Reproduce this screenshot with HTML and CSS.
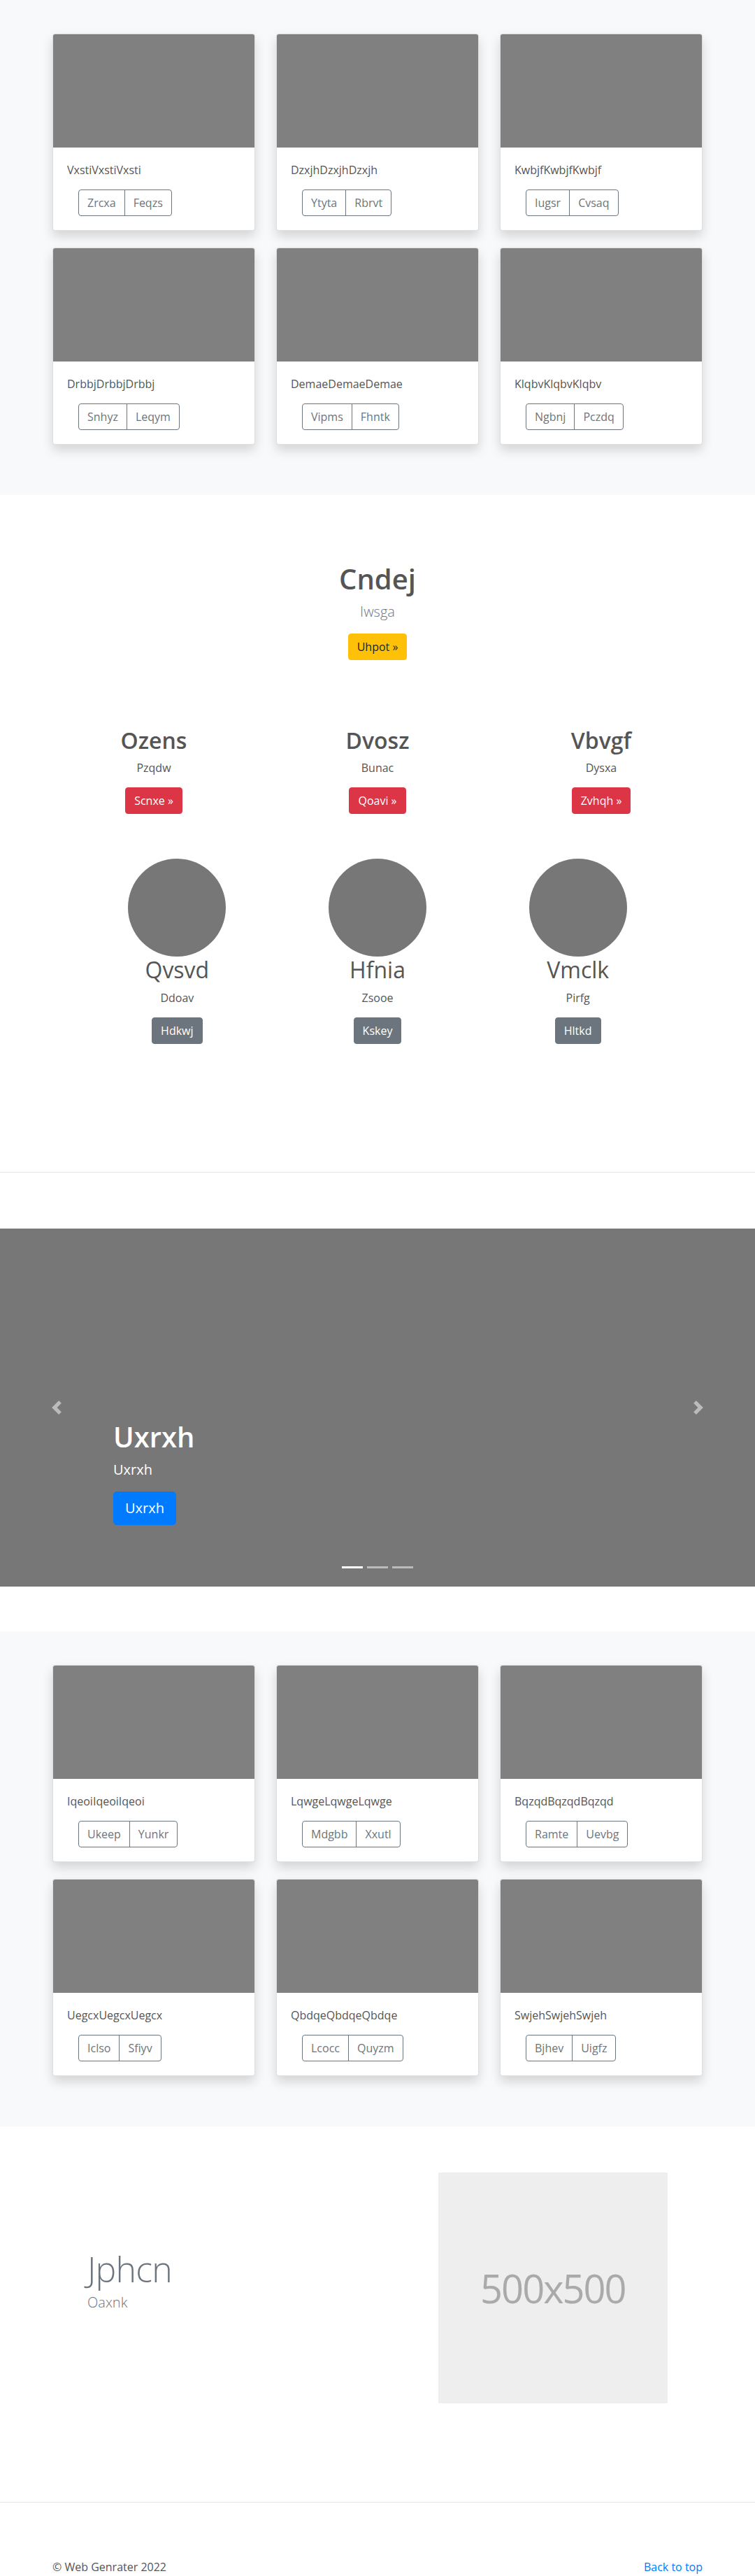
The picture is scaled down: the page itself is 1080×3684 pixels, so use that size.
FILE: index.html
```html
<!DOCTYPE html>
<html lang="en">
<head>
<meta charset="utf-8">
<title>Album</title>
<link rel="stylesheet" href="styles.css">
</head>
<body>
<main>
  <section class="album">
    <div class="container">
      <div class="card-grid">
        <div class="card"><div class="card-img"></div><div class="card-body"><p class="card-text">VxstiVxstiVxsti</p><div class="btn-group"><button class="btn btn-outline">Zrcxa</button><button class="btn btn-outline">Feqzs</button></div></div></div>
        <div class="card"><div class="card-img"></div><div class="card-body"><p class="card-text">DzxjhDzxjhDzxjh</p><div class="btn-group"><button class="btn btn-outline">Ytyta</button><button class="btn btn-outline">Rbrvt</button></div></div></div>
        <div class="card"><div class="card-img"></div><div class="card-body"><p class="card-text">KwbjfKwbjfKwbjf</p><div class="btn-group"><button class="btn btn-outline">Iugsr</button><button class="btn btn-outline">Cvsaq</button></div></div></div>
        <div class="card"><div class="card-img"></div><div class="card-body"><p class="card-text">DrbbjDrbbjDrbbj</p><div class="btn-group"><button class="btn btn-outline">Snhyz</button><button class="btn btn-outline">Leqym</button></div></div></div>
        <div class="card"><div class="card-img"></div><div class="card-body"><p class="card-text">DemaeDemaeDemae</p><div class="btn-group"><button class="btn btn-outline">Vipms</button><button class="btn btn-outline">Fhntk</button></div></div></div>
        <div class="card"><div class="card-img"></div><div class="card-body"><p class="card-text">KlqbvKlqbvKlqbv</p><div class="btn-group"><button class="btn btn-outline">Ngbnj</button><button class="btn btn-outline">Pczdq</button></div></div></div>
      </div>
    </div>
  </section>

  <section class="intro">
    <div class="hero">
      <h1 class="hero-title">Cndej</h1>
      <p class="lead">Iwsga</p>
      <a class="btn btn-warning" href="#">Uhpot &raquo;</a>
    </div>

    <div class="features">
      <div class="feature">
        <h2 class="feature-title">Ozens</h2>
        <p class="feature-text">Pzqdw</p>
        <a class="btn btn-danger" href="#">Scnxe &raquo;</a>
      </div>
      <div class="feature">
        <h2 class="feature-title">Dvosz</h2>
        <p class="feature-text">Bunac</p>
        <a class="btn btn-danger" href="#">Qoavi &raquo;</a>
      </div>
      <div class="feature">
        <h2 class="feature-title">Vbvgf</h2>
        <p class="feature-text">Dysxa</p>
        <a class="btn btn-danger" href="#">Zvhqh &raquo;</a>
      </div>
    </div>

    <div class="team">
      <div class="member">
        <div class="avatar"></div>
        <h2 class="member-name">Qvsvd</h2>
        <p class="feature-text">Ddoav</p>
        <a class="btn btn-secondary" href="#">Hdkwj</a>
      </div>
      <div class="member">
        <div class="avatar"></div>
        <h2 class="member-name">Hfnia</h2>
        <p class="feature-text">Zsooe</p>
        <a class="btn btn-secondary" href="#">Kskey</a>
      </div>
      <div class="member">
        <div class="avatar"></div>
        <h2 class="member-name">Vmclk</h2>
        <p class="feature-text">Pirfg</p>
        <a class="btn btn-secondary" href="#">Hltkd</a>
      </div>
    </div>
  </section>

  <hr class="divider">

  <div class="carousel">
    <a class="carousel-control prev" href="#">
      <svg width="20" height="20" viewBox="0 0 8 8" fill="#fff"><path d="M5.25 0l-4 4 4 4 1.5-1.5L4.25 4l2.5-2.5L5.25 0z"/></svg>
    </a>
    <div class="carousel-caption">
      <h1 class="caption-title">Uxrxh</h1>
      <p class="caption-text">Uxrxh</p>
      <a class="btn btn-lg btn-primary" href="#">Uxrxh</a>
    </div>
    <a class="carousel-control next" href="#">
      <svg width="20" height="20" viewBox="0 0 8 8" fill="#fff"><path d="M2.75 0l-1.5 1.5L3.75 4l-2.5 2.5L2.75 8l4-4-4-4z"/></svg>
    </a>
    <ol class="indicators">
      <li class="active"></li>
      <li></li>
      <li></li>
    </ol>
  </div>

  <section class="album album-second">
    <div class="container">
      <div class="card-grid">
        <div class="card"><div class="card-img"></div><div class="card-body"><p class="card-text">IqeoiIqeoiIqeoi</p><div class="btn-group"><button class="btn btn-outline">Ukeep</button><button class="btn btn-outline">Yunkr</button></div></div></div>
        <div class="card"><div class="card-img"></div><div class="card-body"><p class="card-text">LqwgeLqwgeLqwge</p><div class="btn-group"><button class="btn btn-outline">Mdgbb</button><button class="btn btn-outline">Xxutl</button></div></div></div>
        <div class="card"><div class="card-img"></div><div class="card-body"><p class="card-text">BqzqdBqzqdBqzqd</p><div class="btn-group"><button class="btn btn-outline">Ramte</button><button class="btn btn-outline">Uevbg</button></div></div></div>
        <div class="card"><div class="card-img"></div><div class="card-body"><p class="card-text">UegcxUegcxUegcx</p><div class="btn-group"><button class="btn btn-outline">Iclso</button><button class="btn btn-outline">Sfiyv</button></div></div></div>
        <div class="card"><div class="card-img"></div><div class="card-body"><p class="card-text">QbdqeQbdqeQbdqe</p><div class="btn-group"><button class="btn btn-outline">Lcocc</button><button class="btn btn-outline">Quyzm</button></div></div></div>
        <div class="card"><div class="card-img"></div><div class="card-body"><p class="card-text">SwjehSwjehSwjeh</p><div class="btn-group"><button class="btn btn-outline">Bjhev</button><button class="btn btn-outline">Uigfz</button></div></div></div>
      </div>
    </div>
  </section>

  <section class="featurette">
    <div class="featurette-text">
      <h2 class="featurette-heading">Jphcn</h2>
      <p class="lead">Oaxnk</p>
    </div>
    <div class="featurette-media">
      <div class="placeholder">500x500</div>
    </div>
  </section>

  <hr class="divider">

  <footer class="footer">
    <p class="copyright">&copy; Web Genrater 2022</p>
    <p class="back"><a href="#">Back to top</a></p>
  </footer>
</main>
</body>
</html>
```

FILE: styles.css
```css
* { box-sizing: border-box; }

html, body {
  margin: 0;
  padding: 0;
}

body {
  font-family: "Open Sans", "Noto Sans", Arial, sans-serif;
  font-size: 16px;
  line-height: 1.5;
  color: #555;
  background: #fff;
}

a { color: #007bff; text-decoration: none; }

p { margin: 0 0 16px; }

/* ---------- Buttons ---------- */
.btn {
  display: inline-block;
  font-family: inherit;
  font-size: 16px;
  line-height: 24px;
  font-weight: 400;
  padding: 6px 12px;
  border: 1px solid transparent;
  border-radius: 4px;
  text-align: center;
  vertical-align: middle;
  cursor: pointer;
  white-space: nowrap;
}
.btn-lg {
  font-size: 20px;
  line-height: 30px;
  padding: 8px 16px;
  border-radius: 5px;
}
.btn-warning { background: #ffc107; border-color: #ffc107; color: #212529; }
.btn-danger { background: #dc3545; border-color: #dc3545; color: #fff; }
.btn-secondary { background: #6c757d; border-color: #6c757d; color: #fff; }
.btn-primary { background: #007bff; border-color: #007bff; color: #fff; }
.btn-outline { background: transparent; border-color: #6c757d; color: #6c757d; }

.btn-group {
  display: inline-flex;
  margin-left: 16px;
}
.btn-group .btn { border-radius: 0; }
.btn-group .btn + .btn { margin-left: -1px; }
.btn-group .btn:first-child { border-radius: 4px 0 0 4px; }
.btn-group .btn:last-child { border-radius: 0 4px 4px 0; }

/* ---------- Album ---------- */
.album {
  background: #f8f9fa;
  padding: 48px 0 72px;
}
.album-second { margin-top: 64px; }

.container {
  width: 930px;
  margin: 0 auto;
}

.card-grid {
  display: grid;
  grid-template-columns: repeat(3, 290px);
  column-gap: 30px;
  row-gap: 24px;
}

.card {
  background: #fff;
  border: 1px solid rgba(0,0,0,.125);
  border-radius: 4px;
  overflow: hidden;
  box-shadow: 0 8px 16px rgba(0,0,0,.15);
}
.card-img {
  height: 162px;
  background: #808080;
}
.card-body { padding: 20px; }
.card-text { margin: 0 0 16px; color: #555; }
.card-body .btn-group { display: flex; width: max-content; }

/* ---------- Intro ---------- */
.intro {
  padding: 96px 0 183px;
  text-align: center;
}
.hero-title {
  margin: 0 0 8px;
  font-size: 40px;
  line-height: 48px;
  font-weight: 600;
  color: #555;
}
.lead {
  font-size: 20px;
  line-height: 30px;
  font-weight: 300;
  color: #6c757d;
  margin: 0 0 16px;
}

.features {
  width: 960px;
  margin: 96px auto 0;
  display: grid;
  grid-template-columns: repeat(3, 1fr);
}
.feature-title {
  margin: 0 0 8px;
  font-size: 32px;
  line-height: 38.4px;
  font-weight: 600;
  color: #555;
}
.feature-text { margin: 0 0 16px; color: #555; }

.team {
  width: 860px;
  margin: 64px auto 0;
  display: grid;
  grid-template-columns: repeat(3, 1fr);
}
.member { display: flex; flex-direction: column; align-items: center; }
.member .btn { align-self: center; }
.avatar {
  width: 140px;
  height: 140px;
  border-radius: 50%;
  background: #777;
}
.member-name {
  margin: 0 0 8px;
  font-size: 32px;
  line-height: 38.4px;
  font-weight: 400;
  color: #555;
}

/* ---------- Dividers ---------- */
.divider {
  margin: 0 0 80px;
  border: 0;
  border-top: 1px solid rgba(0,0,0,.1);
  height: 0;
}

/* ---------- Carousel ---------- */
.carousel {
  position: relative;
  height: 512px;
  background: #777;
}
.carousel-control {
  position: absolute;
  top: 0;
  bottom: 0;
  width: 15%;
  display: flex;
  align-items: center;
  justify-content: center;
  opacity: .5;
}
.carousel-control.prev { left: 0; }
.carousel-control.next { right: 0; }
.carousel-control svg { display: block; }

.carousel-caption {
  position: absolute;
  left: 15%;
  right: 15%;
  bottom: 52px;
  padding: 20px 0;
  color: #fff;
  text-align: left;
}
.caption-title {
  margin: 0 0 8px;
  font-size: 40px;
  line-height: 48px;
  font-weight: 600;
  color: #fff;
}
.caption-text {
  margin: 0 0 16px;
  font-size: 20px;
  line-height: 30px;
}
.carousel-caption .btn { margin-bottom: 16px; }

.indicators {
  position: absolute;
  left: 0;
  right: 0;
  bottom: 26px;
  margin: 0;
  padding: 0;
  list-style: none;
  display: flex;
  justify-content: center;
}
.indicators li {
  width: 30px;
  height: 3px;
  margin: 0 3px;
  background: #fff;
  opacity: .5;
}
.indicators li.active { opacity: 1; }

/* ---------- Featurette ---------- */
.featurette {
  width: 860px;
  margin: 0 auto;
  padding: 66px 0 141px;
  display: grid;
  grid-template-columns: 7fr 5fr;
  align-items: center;
}
.featurette-text { padding: 0 15px; }
.featurette-media { padding: 0 15px; }
.featurette-heading {
  margin: 0 0 8px;
  font-size: 50px;
  line-height: 1;
  font-weight: 300;
  letter-spacing: -0.8px;
  color: #6c757d;
}
.placeholder {
  height: 330px;
  background: #eee;
  color: #aaa;
  font-size: 56px;
  letter-spacing: -2px;
  display: flex;
  align-items: center;
  justify-content: center;
}

/* ---------- Footer ---------- */
.footer {
  width: 930px;
  margin: 0 auto;
  display: flex;
  justify-content: space-between;
}
.footer p { margin: 0 0 16px; }
.copyright { color: #555; }
```
